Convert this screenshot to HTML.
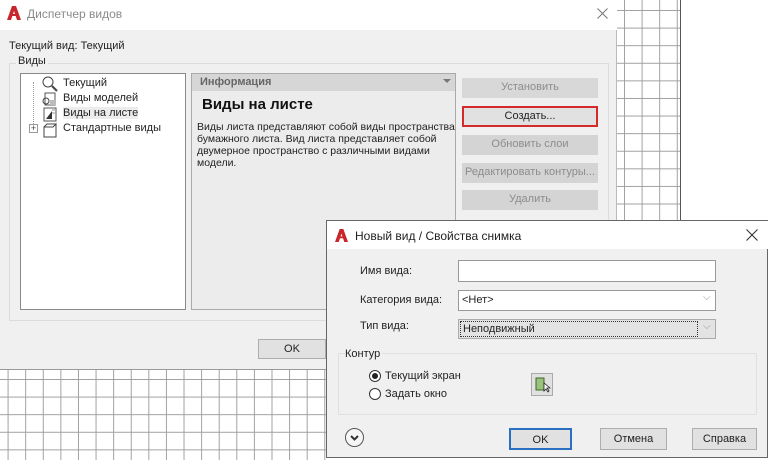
<!DOCTYPE html>
<html><head><meta charset="utf-8"><style>
*{margin:0;padding:0;box-sizing:border-box}
body{width:768px;height:458px;overflow:hidden;background:#fff;position:relative;font-family:"Liberation Sans","Noto Sans CJK SC",sans-serif;font-size:11px;color:#222}
.a{position:absolute}
.grid{background-image:linear-gradient(to right,#a0a0a0 1px,transparent 1px),linear-gradient(to bottom,#a0a0a0 1px,transparent 1px);background-size:17.6px 17.6px}
.btn{position:absolute;background:#d4d4d4;color:#8c8c8c;text-align:center;line-height:19px;font-size:11px}
.b2{position:absolute;background:#e1e1e1;border:1px solid #adadad;text-align:center;font-size:11px;color:#222}
</style></head><body>
<div class="a grid" style="left:-10px;top:370px;width:336px;height:90px;background-position:0 9px"></div>
<div class="a" style="left:0;top:369px;width:326px;height:1px;background:#999"></div>
<div class="a grid" style="left:617px;top:0;width:63px;height:222px;background-position:7px 10px"></div>
<div class="a" style="left:680px;top:0;width:1px;height:222px;background:#555"></div>
<div class="a" style="left:0;top:0;width:617px;height:369px;background:#f0f0f0;border-right:1px solid #bbb"></div>
<div class="a" style="left:0;top:0;width:617px;height:30px;background:#fff"></div>
<svg class="a" style="left:7px;top:6px" width="14" height="14" viewBox="0 0 14 14"><path d="M0 14L5 0h4l5 14h-4L7 5 4 14z" fill="#c8262b"/><rect x="4" y="8" width="6" height="2" fill="#c8262b"/></svg>
<div class="a" style="left:27px;top:7px;font-size:12px;color:#8a8a8a">Диспетчер видов</div>
<svg class="a" style="left:597px;top:8px" width="11" height="11"><path d="M0.5 0.5l10 10M10.5 0.5l-10 10" stroke="#777" stroke-width="1"/></svg>
<div class="a" style="left:9px;top:40px">Текущий вид: Текущий</div>
<div class="a" style="left:9px;top:63px;width:600px;height:258px;border:1px solid #dcdcdc"></div>
<div class="a" style="left:16px;top:55px;background:#f0f0f0;padding:0 2px">Виды</div>
<div class="a" style="left:20px;top:73px;width:166px;height:237px;background:#fff;border:1px solid #888"></div>
<div class="a" style="left:33px;top:82px;width:1px;height:48px;border-left:1px dotted #999"></div>
<svg class="a" style="left:38px;top:75px" width="22" height="64" viewBox="0 0 22 64">
<circle cx="10" cy="7" r="5" fill="#fff" stroke="#444"/><path d="M14 11l5 5" stroke="#444" stroke-width="2"/>
<rect x="7" y="18" width="10" height="12" fill="#fff" stroke="#555"/><circle cx="8" cy="26" r="3" fill="none" stroke="#444"/><rect x="12" y="25" width="6" height="5" fill="#bbb"/>
<rect x="6" y="33" width="12" height="13" fill="#fff" stroke="#555"/><path d="M8 44l6-8v8z" fill="#333"/><path d="M14 35h3M14 38h3" stroke="#999"/>
<path d="M6 52h9l3-3v13H6z" fill="#fff" stroke="#444"/><path d="M6 52l3-3h9" fill="none" stroke="#444"/>
</svg>
<div class="a" style="left:29px;top:124px;width:9px;height:9px;border:1px solid #999;background:#fff;font-size:9px;line-height:7px;text-align:center;color:#444">+</div>
<div class="a" style="left:63px;top:76px;line-height:15px">Текущий<br>Виды моделей<br><span style="background:#ececec">Виды на листе</span><br>Стандартные виды</div>
<div class="a" style="left:191px;top:73px;width:265px;height:237px;background:#ececec;border:1px solid #aaa"></div>
<div class="a" style="left:192px;top:74px;width:263px;height:17px;background:#d6d6d6;color:#666;font-weight:bold;padding:2px 8px">Информация</div>
<div class="a" style="left:443px;top:79px;width:0;height:0;border:4px solid transparent;border-top-color:#777"></div>
<div class="a" style="left:202px;top:96px;font-size:15px;font-weight:bold;color:#111">Виды на листе</div>
<div class="a" style="left:197px;top:121px;width:265px;line-height:12px;font-size:10.5px">Виды листа представляют собой виды пространства бумажного листа. Вид листа представляет собой двумерное пространство с различными видами модели.</div>
<div class="btn" style="left:462px;top:78px;width:136px;height:20px;background:#d8d8d8">Установить</div>
<div class="btn" style="left:462px;top:106px;width:136px;height:21px;border:2px solid #d42a2a;color:#222;line-height:16px;background:#e1e1e1">Создать...</div>
<div class="btn" style="left:462px;top:135px;width:136px;height:20px">Обновить слои</div>
<div class="btn" style="left:462px;top:163px;width:136px;height:20px">Редактировать контуры...</div>
<div class="btn" style="left:462px;top:190px;width:136px;height:20px">Удалить</div>
<div class="b2" style="left:258px;top:339px;width:68px;height:20px;line-height:18px">OK</div>
<div class="a" style="left:326px;top:220px;width:442px;height:238px;background:#f0f0f0;border:1px solid #666"></div>
<div class="a" style="left:327px;top:221px;width:441px;height:28px;background:#fff"></div>
<svg class="a" style="left:335px;top:229px" width="13" height="13" viewBox="0 0 14 14"><path d="M0 14L5 0h4l5 14h-4L7 5 4 14z" fill="#c8262b"/><rect x="4" y="8" width="6" height="2" fill="#c8262b"/></svg>
<div class="a" style="left:355px;top:229px;font-size:12px;color:#222">Новый вид / Свойства снимка</div>
<svg class="a" style="left:746px;top:229px" width="12" height="12"><path d="M0.5 0.5l11 11M11.5 0.5l-11 11" stroke="#333" stroke-width="1.1"/></svg>
<div class="a" style="left:360px;top:265px">Имя вида:</div>
<div class="a" style="left:458px;top:260px;width:258px;height:22px;background:#fff;border:1px solid #999"></div>
<div class="a" style="left:360px;top:294px">Категория вида:</div>
<div class="a" style="left:458px;top:290px;width:258px;height:21px;background:#fff;border:1px solid #999;padding:3px 3px">&lt;Нет&gt;</div>
<div class="a" style="left:703px;top:292px;color:#999;font-size:10px">⌵</div>
<div class="a" style="left:360px;top:320px">Тип вида:</div>
<div class="a" style="left:458px;top:319px;width:258px;height:20px;background:#e3e3e3;border:1px solid #aaa"></div>
<div class="a" style="left:460px;top:321px;width:238px;height:16px;border:1px dotted #333;padding:1px 2px">Неподвижный</div>
<div class="a" style="left:703px;top:321px;color:#999;font-size:10px">⌵</div>
<div class="a" style="left:338px;top:353px;width:419px;height:62px;border:1px solid #e0e0e0"></div>
<div class="a" style="left:345px;top:348px;background:#f0f0f0;padding-right:2px">Контур</div>
<div class="a" style="left:369px;top:370px;width:12px;height:12px;border-radius:50%;border:1px solid #333;background:#fff"></div>
<div class="a" style="left:372px;top:373px;width:6px;height:6px;border-radius:50%;background:#222"></div>
<div class="a" style="left:369px;top:388px;width:12px;height:12px;border-radius:50%;border:1px solid #333;background:#fff"></div>
<div class="a" style="left:385px;top:370px">Текущий экран</div>
<div class="a" style="left:385px;top:388px">Задать окно</div>
<div class="a" style="left:531px;top:373px;width:22px;height:23px;background:#e1e1e1;border:1px solid #aaa"></div>
<svg class="a" style="left:535px;top:377px" width="16" height="16" viewBox="0 0 16 16"><rect x="1" y="1" width="8" height="12" fill="#9bc27a" stroke="#3a6a2a"/><path d="M9 6v8l2-2 2 3 1-1-2-3h3z" fill="#fff" stroke="#222" stroke-width=".8"/></svg>
<div class="a" style="left:345px;top:428px;width:19px;height:19px;border-radius:50%;border:1px solid #555;background:#f6f6f6"></div>
<svg class="a" style="left:349px;top:432px" width="11" height="11" viewBox="0 0 11 11"><path d="M2 4l3.5 3.5L9 4" fill="none" stroke="#333" stroke-width="2"/></svg>
<div class="b2" style="left:509px;top:428px;width:63px;height:22px;line-height:20px;border:2px solid #2b6fc2">OK</div>
<div class="b2" style="left:600px;top:428px;width:67px;height:22px;line-height:20px">Отмена</div>
<div class="b2" style="left:692px;top:428px;width:65px;height:22px;line-height:20px">Справка</div>
</body></html>
